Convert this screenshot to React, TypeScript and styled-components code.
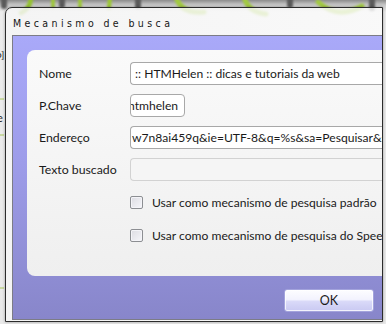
import React from "react";
import styled, { createGlobalStyle } from "styled-components";

const Global = createGlobalStyle`
  html, body { margin: 0; padding: 0; }
  body {
    width: 386px;
    height: 324px;
    overflow: hidden;
    background: #e8e8e8;
    font-family: Lato, "Open Sans", sans-serif;
  }
`;

const Screen = styled.div`
  position: relative;
  width: 386px;
  height: 324px;
  overflow: hidden;
  padding: 7px 0 0 5px;
  box-sizing: border-box;
  background: linear-gradient(#8c8c8c 0px, #c9c9c9 5px, #ececec 12px, #e9e9e9 100%);
`;

const Backdrop = styled.svg`
  position: absolute;
  left: 0;
  top: 0;
  width: 386px;
  height: 324px;
`;

const Window = styled.div`
  position: relative;
  width: 378px;
  height: 315px;
  box-sizing: border-box;
  border: 1px solid #2c2c2c;
  border-top-left-radius: 7px;
  background: linear-gradient(90deg, rgba(246, 246, 246, 0.84), rgba(252, 252, 252, 0.8));
  box-shadow: 0 0 3px rgba(0, 0, 0, 0.35);
  display: flex;
  flex-direction: column;
  padding: 0 0 1px 6px;
`;

const TitleBar = styled.div`
  height: 27px;
  display: flex;
  align-items: center;
  padding-left: 1px;
  padding-top: 2px;
  box-sizing: border-box;
  font-family: "DejaVu Sans Condensed", "Liberation Sans", sans-serif;
  font-stretch: condensed;
  font-size: 10.5px;
  letter-spacing: 3.4px;
  color: #161616;
`;

const Client = styled.div`
  flex: 1;
  display: flex;
  flex-direction: column;
  border: 1px solid #7c7c86;
  border-right: none;
  background: linear-gradient(#a9a9f9 0%, #9d9ce9 45%, #8886ca 100%);
  padding: 14px 0 7px 14px;
  overflow: hidden;
`;

const Panel = styled.div`
  width: calc(100% + 16px);
  height: 226px;
  box-sizing: border-box;
  border-radius: 8px;
  background: linear-gradient(#fafafa, #efefef);
  padding: 12px 0 0 12px;
  display: grid;
  grid-template-columns: 91px 1fr;
  grid-auto-rows: 23px;
  row-gap: 9px;
  align-items: center;
  font-size: 12.1px;
  color: #1a1a1a;
`;

const Label = styled.div`
  white-space: nowrap;
  font-size: 12.3px;
`;

const Field = styled.div<{ $width?: number; $disabled?: boolean; $shift?: number }>`
  height: 23px;
  box-sizing: border-box;
  width: ${(p) => (p.$width ? `${p.$width}px` : "auto")};
  border: 1px solid ${(p) => (p.$disabled ? "#d2d2d2" : "#a8a8a8")};
  border-right: ${(p) => (p.$width ? "" : "none")};
  border-radius: ${(p) => (p.$width ? "4px" : "4px 0 0 4px")};
  background: ${(p) => (p.$disabled ? "#f5f5f5" : "#ffffff")};
  display: flex;
  align-items: center;
  overflow: hidden;
  white-space: nowrap;
  padding-left: ${(p) => (p.$shift !== undefined ? 0 : 4)}px;
  & > span {
    margin-left: ${(p) => p.$shift ?? 0}px;
  }
`;

const CheckList = styled.div`
  grid-column: 2;
  grid-row: span 2;
  align-self: start;
  display: flex;
  flex-direction: column;
  gap: 16px;
  margin-top: 4px;
`;

const CheckRow = styled.label`
  display: flex;
  align-items: center;
  gap: 9px;
  height: 17px;
  white-space: nowrap;
`;

const Box = styled.span`
  width: 13px;
  height: 13px;
  box-sizing: border-box;
  border: 1px solid #8c8e92;
  border-radius: 2px;
  background: linear-gradient(135deg, #dcdce2, #f6f6fa);
  box-shadow: inset 0 0 0 1px #f4f4f8;
  flex: none;
`;

const ButtonRow = styled.div`
  margin-top: auto;
  display: flex;
  justify-content: flex-end;
  padding-right: 8px;
`;

const Button = styled.button`
  width: 90px;
  height: 23px;
  border: 1px solid #a3a3dc;
  border-radius: 3px;
  background: linear-gradient(#fdfdff 0%, #f3f3fe 45%, #d9d9f8 55%, #c9c9f2 100%);
  box-shadow: inset 0 0 0 1px rgba(255, 255, 255, 0.75);
  font-family: inherit;
  font-size: 12.5px;
  color: #1a1a1a;
  padding: 0;
`;

export default function App() {
  return (
    <>
      <Global />
      <Screen>
        <Backdrop viewBox="0 0 386 324">
          <defs>
            <filter id="bl" x="-20%" y="-50%" width="140%" height="200%">
              <feGaussianBlur stdDeviation="1.3" />
            </filter>
          </defs>
          <g filter="url(#bl)" fill="none" strokeLinecap="round">
            <path d="M4 -2 L4 6 M62 -2 L62 5 M138 -2 L138 6 M290 -2 L290 5 M372 -2 L372 8" stroke="#5a5a5a" strokeWidth="6" />
            <path d="M31 -3 Q31 8 21 13" stroke="#94c22e" strokeWidth="4.5" />
            <path d="M53 -3 L53 7" stroke="#9cc932" strokeWidth="3.5" />
            <path d="M80 -3 L80 7" stroke="#9cc932" strokeWidth="3.5" />
            <path d="M110 -3 L109 8" stroke="#9cc932" strokeWidth="4" />
            <path d="M176 -3 Q181 14 204 12" stroke="#a2ca40" strokeWidth="5" />
            <path d="M244 -3 Q248 12 266 14" stroke="#a2ca40" strokeWidth="5" />
            <path d="M318 2 Q338 20 362 6" stroke="#a2ca40" strokeWidth="5" />
          </g>
          <path d="M0 99 H4 M0 135 H4 M0 288 H4" stroke="#a8c85a" strokeWidth="1" />
          <text x="-4" y="58" fontSize="10" fontFamily="Lato" fill="#222">o]</text>
          <text x="-3" y="122" fontSize="11" fontFamily="Lato" fill="#222">e</text>
        </Backdrop>
        <Window>
          <TitleBar>Mecanismo de busca</TitleBar>
          <Client>
            <Panel>
              <Label>Nome</Label>
              <Field>
                <span>:: HTMHelen :: dicas e tutoriais da web</span>
              </Field>
              <Label>P.Chave</Label>
              <Field $width={55} $shift={-3}>
                <span>htmhelen</span>
              </Field>
              <Label>Endereço</Label>
              <Field $shift={1}>
                <span>w7n8ai459q&amp;ie=UTF-8&amp;q=%s&amp;sa=Pesquisar&amp;siteurl=www.htmhelen.com</span>
              </Field>
              <Label>Texto buscado</Label>
              <Field $disabled />
              <CheckList>
                <CheckRow>
                  <Box />
                  Usar como mecanismo de pesquisa padrão
                </CheckRow>
                <CheckRow>
                  <Box />
                  Usar como mecanismo de pesquisa do Speed Dial
                </CheckRow>
              </CheckList>
            </Panel>
            <ButtonRow>
              <Button>OK</Button>
            </ButtonRow>
          </Client>
        </Window>
      </Screen>
    </>
  );
}
